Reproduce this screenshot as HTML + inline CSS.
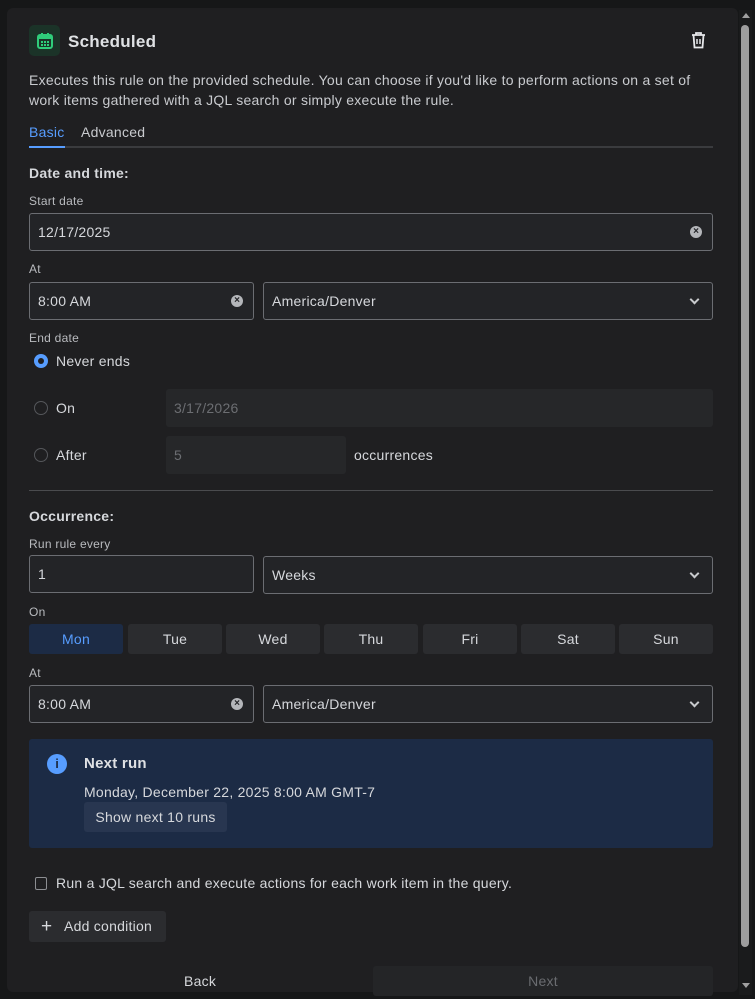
<!DOCTYPE html>
<html><head><style>
*{box-sizing:border-box;margin:0;padding:0}
body{width:755px;height:999px;background:#161718;font-family:"Liberation Sans",sans-serif;color:#d6d8dc;position:relative;overflow:hidden;font-size:14px;letter-spacing:0.25px}
.a{position:absolute}
.panel{left:7px;top:8px;width:731px;height:984px;background:#1f1f21;border-radius:6px}
.inp{background:#232427;border:1px solid #6b6d72;border-radius:3px;padding-left:8px;display:flex;align-items:center;font-size:14px;color:#d6d8dc}
.dis{background:#262729;border:none;color:#6c6e72}
.lbl{font-size:12px;color:#b9bbbf}
.h{font-weight:bold;font-size:14px;color:#d6d8dc}
.x{position:absolute;right:10px;top:50%;margin-top:-6px;width:12px;height:12px;border-radius:50%;background:#b4b6ba;color:#232427;font-size:10px;line-height:12px;text-align:center;font-weight:bold;letter-spacing:0}
.chev{position:absolute;right:14px;top:50%;margin-top:-5px;width:7px;height:7px;border-right:2px solid #c8cacd;border-bottom:2px solid #c8cacd;transform:rotate(45deg)}
.radio{width:14px;height:14px;border-radius:50%;border:1.5px solid #55575b}
.day{top:624px;width:94px;height:30px;background:#2b2c2f;border-radius:3px;text-align:center;line-height:30px;font-size:14px;color:#d6d8dc}
</style></head><body>
<div class="a panel"></div>
<div class="a" style="left:739px;top:10px;width:13px;height:985px;background:#1a1b1c"></div>
<div class="a" style="left:742px;top:13px;width:0;height:0;border-left:4px solid transparent;border-right:4px solid transparent;border-bottom:5px solid #a0a0a0"></div>
<div class="a" style="left:741px;top:25px;width:8px;height:922px;background:#9e9e9e;border-radius:4px"></div>
<div class="a" style="left:742px;top:983px;width:0;height:0;border-left:4px solid transparent;border-right:4px solid transparent;border-top:5px solid #a0a0a0"></div>

<div class="a" style="left:29px;top:25px;width:31px;height:31px;background:#1b3328;border-radius:5px"></div>
<svg class="a" style="left:36px;top:32px" width="18" height="18" viewBox="0 0 18 18"><rect x="2" y="3" width="14" height="13" rx="2" fill="none" stroke="#2fcc7a" stroke-width="2"/><rect x="2" y="3" width="14" height="4" fill="#2fcc7a"/><rect x="5" y="1" width="2" height="4" fill="#2fcc7a"/><rect x="11" y="1" width="2" height="4" fill="#2fcc7a"/><g fill="#2fcc7a"><rect x="5" y="9" width="2" height="2"/><rect x="8" y="9" width="2" height="2"/><rect x="11" y="9" width="2" height="2"/><rect x="5" y="12" width="2" height="2"/><rect x="8" y="12" width="2" height="2"/><rect x="11" y="12" width="2" height="2"/></g></svg>
<div class="a" style="left:68px;top:32px;font-size:17px;font-weight:bold;color:#dfe1e4">Scheduled</div>
<svg class="a" style="left:690px;top:31px" width="17" height="18" viewBox="0 0 17 18"><path d="M2 4h13M6 4V2h5v2M3.5 4l1 12.5h8l1-12.5" fill="none" stroke="#e6e7ea" stroke-width="1.8"/><path d="M7 8v5M10 8v5" stroke="#e6e7ea" stroke-width="1.5"/></svg>
<div class="a" style="left:29px;top:71px;width:690px;line-height:19.5px;color:#c9cbcf">Executes this rule on the provided schedule. You can choose if you'd like to perform actions on a set of<br>work items gathered with a JQL search or simply execute the rule.</div>
<div class="a" style="left:29px;top:124px;color:#579dff">Basic</div>
<div class="a" style="left:81px;top:124px;color:#c9cbcf">Advanced</div>
<div class="a" style="left:29px;top:146px;width:684px;height:2px;background:#3a3b3e"></div>
<div class="a" style="left:29px;top:146px;width:36px;height:2px;background:#579dff"></div>

<div class="a h" style="left:29px;top:165px">Date and time:</div>
<div class="a lbl" style="left:29px;top:194px">Start date</div>
<div class="a inp" style="left:29px;top:213px;width:684px;height:38px">12/17/2025<span class="x">×</span></div>
<div class="a lbl" style="left:29px;top:262px">At</div>
<div class="a inp" style="left:29px;top:282px;width:225px;height:38px">8:00 AM<span class="x">×</span></div>
<div class="a inp" style="left:263px;top:282px;width:450px;height:38px">America/Denver<span class="chev"></span></div>
<div class="a lbl" style="left:29px;top:331px">End date</div>
<div class="a" style="left:34px;top:354px;width:14px;height:14px;border-radius:50%;background:#579dff"></div>
<div class="a" style="left:38px;top:358px;width:6px;height:6px;border-radius:50%;background:#1f1f21"></div>
<div class="a" style="left:56px;top:353px">Never ends</div>
<div class="a radio" style="left:34px;top:401px"></div>
<div class="a" style="left:56px;top:400px">On</div>
<div class="a inp dis" style="left:166px;top:389px;width:547px;height:38px">3/17/2026</div>
<div class="a radio" style="left:34px;top:448px"></div>
<div class="a" style="left:56px;top:447px">After</div>
<div class="a inp dis" style="left:166px;top:436px;width:180px;height:38px">5</div>
<div class="a" style="left:354px;top:447px">occurrences</div>
<div class="a" style="left:29px;top:490px;width:684px;height:1px;background:#4a4b4e"></div>

<div class="a h" style="left:29px;top:508px">Occurrence:</div>
<div class="a lbl" style="left:29px;top:537px">Run rule every</div>
<div class="a inp" style="left:29px;top:555px;width:225px;height:38px">1</div>
<div class="a inp" style="left:263px;top:556px;width:450px;height:38px">Weeks<span class="chev"></span></div>
<div class="a lbl" style="left:29px;top:605px">On</div>
<div class="a day" style="left:29px;background:#1c2b45;color:#579dff">Mon</div>
<div class="a day" style="left:128px">Tue</div>
<div class="a day" style="left:226px">Wed</div>
<div class="a day" style="left:324px">Thu</div>
<div class="a day" style="left:423px">Fri</div>
<div class="a day" style="left:521px">Sat</div>
<div class="a day" style="left:619px">Sun</div>
<div class="a lbl" style="left:29px;top:666px">At</div>
<div class="a inp" style="left:29px;top:685px;width:225px;height:38px">8:00 AM<span class="x">×</span></div>
<div class="a inp" style="left:263px;top:685px;width:450px;height:38px">America/Denver<span class="chev"></span></div>

<div class="a" style="left:29px;top:739px;width:684px;height:109px;background:#1c2b45;border-radius:3px"></div>
<div class="a" style="left:47px;top:754px;width:20px;height:20px;border-radius:50%;background:#579dff;color:#1c2b45;font-weight:bold;font-size:13px;text-align:center;line-height:20px;letter-spacing:0">i</div>
<div class="a" style="left:84px;top:755px;font-size:15px;font-weight:bold;color:#dfe1e4">Next run</div>
<div class="a" style="left:84px;top:784px">Monday, December 22, 2025 8:00 AM GMT-7</div>
<div class="a" style="left:84px;top:802px;width:143px;height:30px;background:#283650;border-radius:3px;text-align:center;line-height:30px">Show next 10 runs</div>

<div class="a" style="left:35px;top:877px;width:12px;height:13px;border:1.5px solid #8c8e92;border-radius:2px"></div>
<div class="a" style="left:56px;top:875px">Run a JQL search and execute actions for each work item in the query.</div>
<div class="a" style="left:29px;top:911px;width:137px;height:31px;background:#2b2c2f;border-radius:3px"></div>
<div class="a" style="left:41px;top:917px;font-size:19px;line-height:19px">+</div>
<div class="a" style="left:64px;top:918px">Add condition</div>
<div class="a" style="left:184px;top:973px">Back</div>
<div class="a" style="left:373px;top:966px;width:340px;height:30px;background:#242527;border-radius:3px;text-align:center;padding-top:7px;color:#6a6c70">Next</div>
</body></html>
